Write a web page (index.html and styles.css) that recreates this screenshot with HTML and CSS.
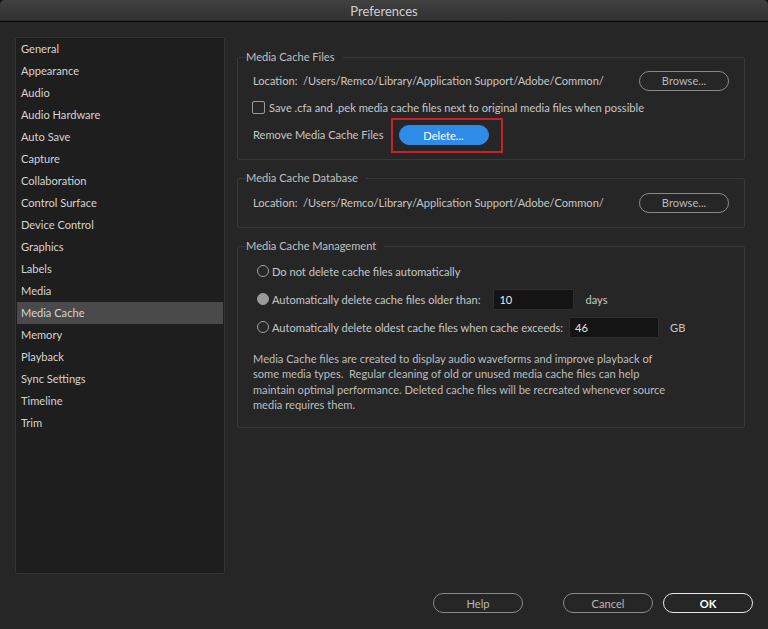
FILE: index.html
```html
<!DOCTYPE html>
<html>
<head>
<meta charset="utf-8">
<title>Preferences</title>
<link rel="stylesheet" href="styles.css">
</head>
<body>
<div class="window">
  <div class="titlebar">Preferences</div>

  <div class="main">
    <ul class="sidebar">
      <li>General</li>
      <li>Appearance</li>
      <li>Audio</li>
      <li>Audio Hardware</li>
      <li>Auto Save</li>
      <li>Capture</li>
      <li>Collaboration</li>
      <li>Control Surface</li>
      <li>Device Control</li>
      <li>Graphics</li>
      <li>Labels</li>
      <li>Media</li>
      <li class="active">Media Cache</li>
      <li>Memory</li>
      <li>Playback</li>
      <li>Sync Settings</li>
      <li>Timeline</li>
      <li>Trim</li>
    </ul>

    <div class="content">
      <fieldset class="group">
        <legend>Media Cache Files</legend>
        <div class="row">
          <span class="path">Location:&nbsp; /Users/Remco/Library/Application Support/Adobe/Common/</span>
          <button type="button" class="btn">Browse...</button>
        </div>
        <div class="row">
          <label class="check"><span class="box"></span>Save .cfa and .pek media cache files next to original media files when possible</label>
        </div>
        <div class="row">
          <span>Remove Media Cache Files</span>
          <span class="highlight"><button type="button" class="btn btn-blue">Delete...</button></span>
        </div>
      </fieldset>

      <fieldset class="group group-db">
        <legend>Media Cache Database</legend>
        <div class="row">
          <span class="path">Location:&nbsp; /Users/Remco/Library/Application Support/Adobe/Common/</span>
          <button type="button" class="btn">Browse...</button>
        </div>
      </fieldset>

      <fieldset class="group group-manage">
        <legend>Media Cache Management</legend>
        <div class="radio-row">
          <span class="radio"></span>Do not delete cache files automatically
        </div>
        <div class="radio-row">
          <span class="radio checked"></span>Automatically delete cache files older than:
          <span class="field field-days">10</span>
          <span class="unit">days</span>
        </div>
        <div class="radio-row">
          <span class="radio"></span>Automatically delete oldest cache files when cache exceeds:
          <span class="field field-gb">46</span>
          <span class="unit">GB</span>
        </div>
        <p class="note">Media Cache files are created to display audio waveforms and improve playback of some media types.&nbsp; Regular cleaning of old or unused media cache files can help maintain optimal performance. Deleted cache files will be recreated whenever source media requires them.</p>
      </fieldset>
    </div>
  </div>

  <div class="footer">
    <button type="button" class="btn btn-help">Help</button>
    <button type="button" class="btn">Cancel</button>
    <button type="button" class="btn btn-ok">OK</button>
  </div>
</div>
</body>
</html>
```

FILE: styles.css
```css
html {background: #111;}
body {margin: 0; font-family: "Lato", "Open Sans", sans-serif; font-size: 11.1px; color: #c6c6c6;}

.window {width: 768px; height: 629px; background: #262626; border-radius: 5px 5px 0 0; overflow: hidden; display: flex; flex-direction: column;}

.titlebar {height: 21px; line-height: 22px; text-align: center; font-size: 13px; color: #cfcfcf; background: linear-gradient(#414141, #2f2f2f); border-bottom: 1px solid #000;}

.main {display: flex; gap: 12px; padding: 15px 0 0 15px;}

.sidebar {list-style: none; margin: 0; padding: 0 1px 2px; width: 206px; height: 533px; background: #1e1e1e; border: 1px solid #333; border-radius: 2px;}
.sidebar li {height: 22px; line-height: 22px; padding-left: 4px; color: #d4d4d4;}
.sidebar li.active {background: #4a4a4a;}

.content {width: 508px; padding-top: 12px; display: flex; flex-direction: column; gap: 10px;}

.group {margin: 0; padding: 2px 15px 11px; border: 1px solid #383838; border-radius: 2px;}
.group legend {margin-left: -7px; padding: 0 8px 0 0; color: #c0c0c0; line-height: 16px;}
.group-db {padding-top: 3px; padding-bottom: 11px;}

.row {height: 27px; display: flex; align-items: center;}
.row .path {flex: 1; white-space: nowrap;}

.btn {height: 20px; width: 90px; padding: 0; font: inherit; color: #b8b8b8; background: transparent; border: 1px solid #8a8a8a; border-radius: 10px;}
.btn-blue {background: #2e8ce8; border-color: #2e8ce8; color: #fff;}
.btn-ok {color: #fff; font-weight: bold; border-color: #e6e6e6;}
.btn-help {margin-right: 30px;}

.highlight {display: flex; margin: 2px 0 0 7px; padding: 5px 12px 6px 6px; border: 2.5px solid #cc1f2a;}

.check {display: flex; align-items: center; gap: 4px; margin-left: -1px;}
.box {width: 11px; height: 11px; border: 1px solid #9a9a9a; border-radius: 2px;}

.group-manage {padding-top: 3px; padding-bottom: 12px;}
.radio-row {height: 28px; display: flex; align-items: center; padding-left: 4px;}
.radio {width: 10px; height: 10px; margin-right: 3px; border: 1.5px solid #a0a0a0; border-radius: 50%;}
.radio.checked {background: #9a9a9a; border-color: #9a9a9a;}
.field {height: 19px; line-height: 19px; padding-left: 5px; background: #141414; border: 1px solid #2e2e2e; border-radius: 2px; color: #e8e8e8;}
.field-days {width: 74px; margin-left: 13px;}
.field-gb {width: 83px; margin-left: 6px;}
.unit {margin-left: 11px;}

.note {margin: 10px 0 3px; width: 418px; line-height: 15.3px; color: #bdbdbd;}

.footer {display: flex; justify-content: flex-end; gap: 10px; padding: 19px 15px 0 0;}
.footer .btn {width: 90px;}
```
